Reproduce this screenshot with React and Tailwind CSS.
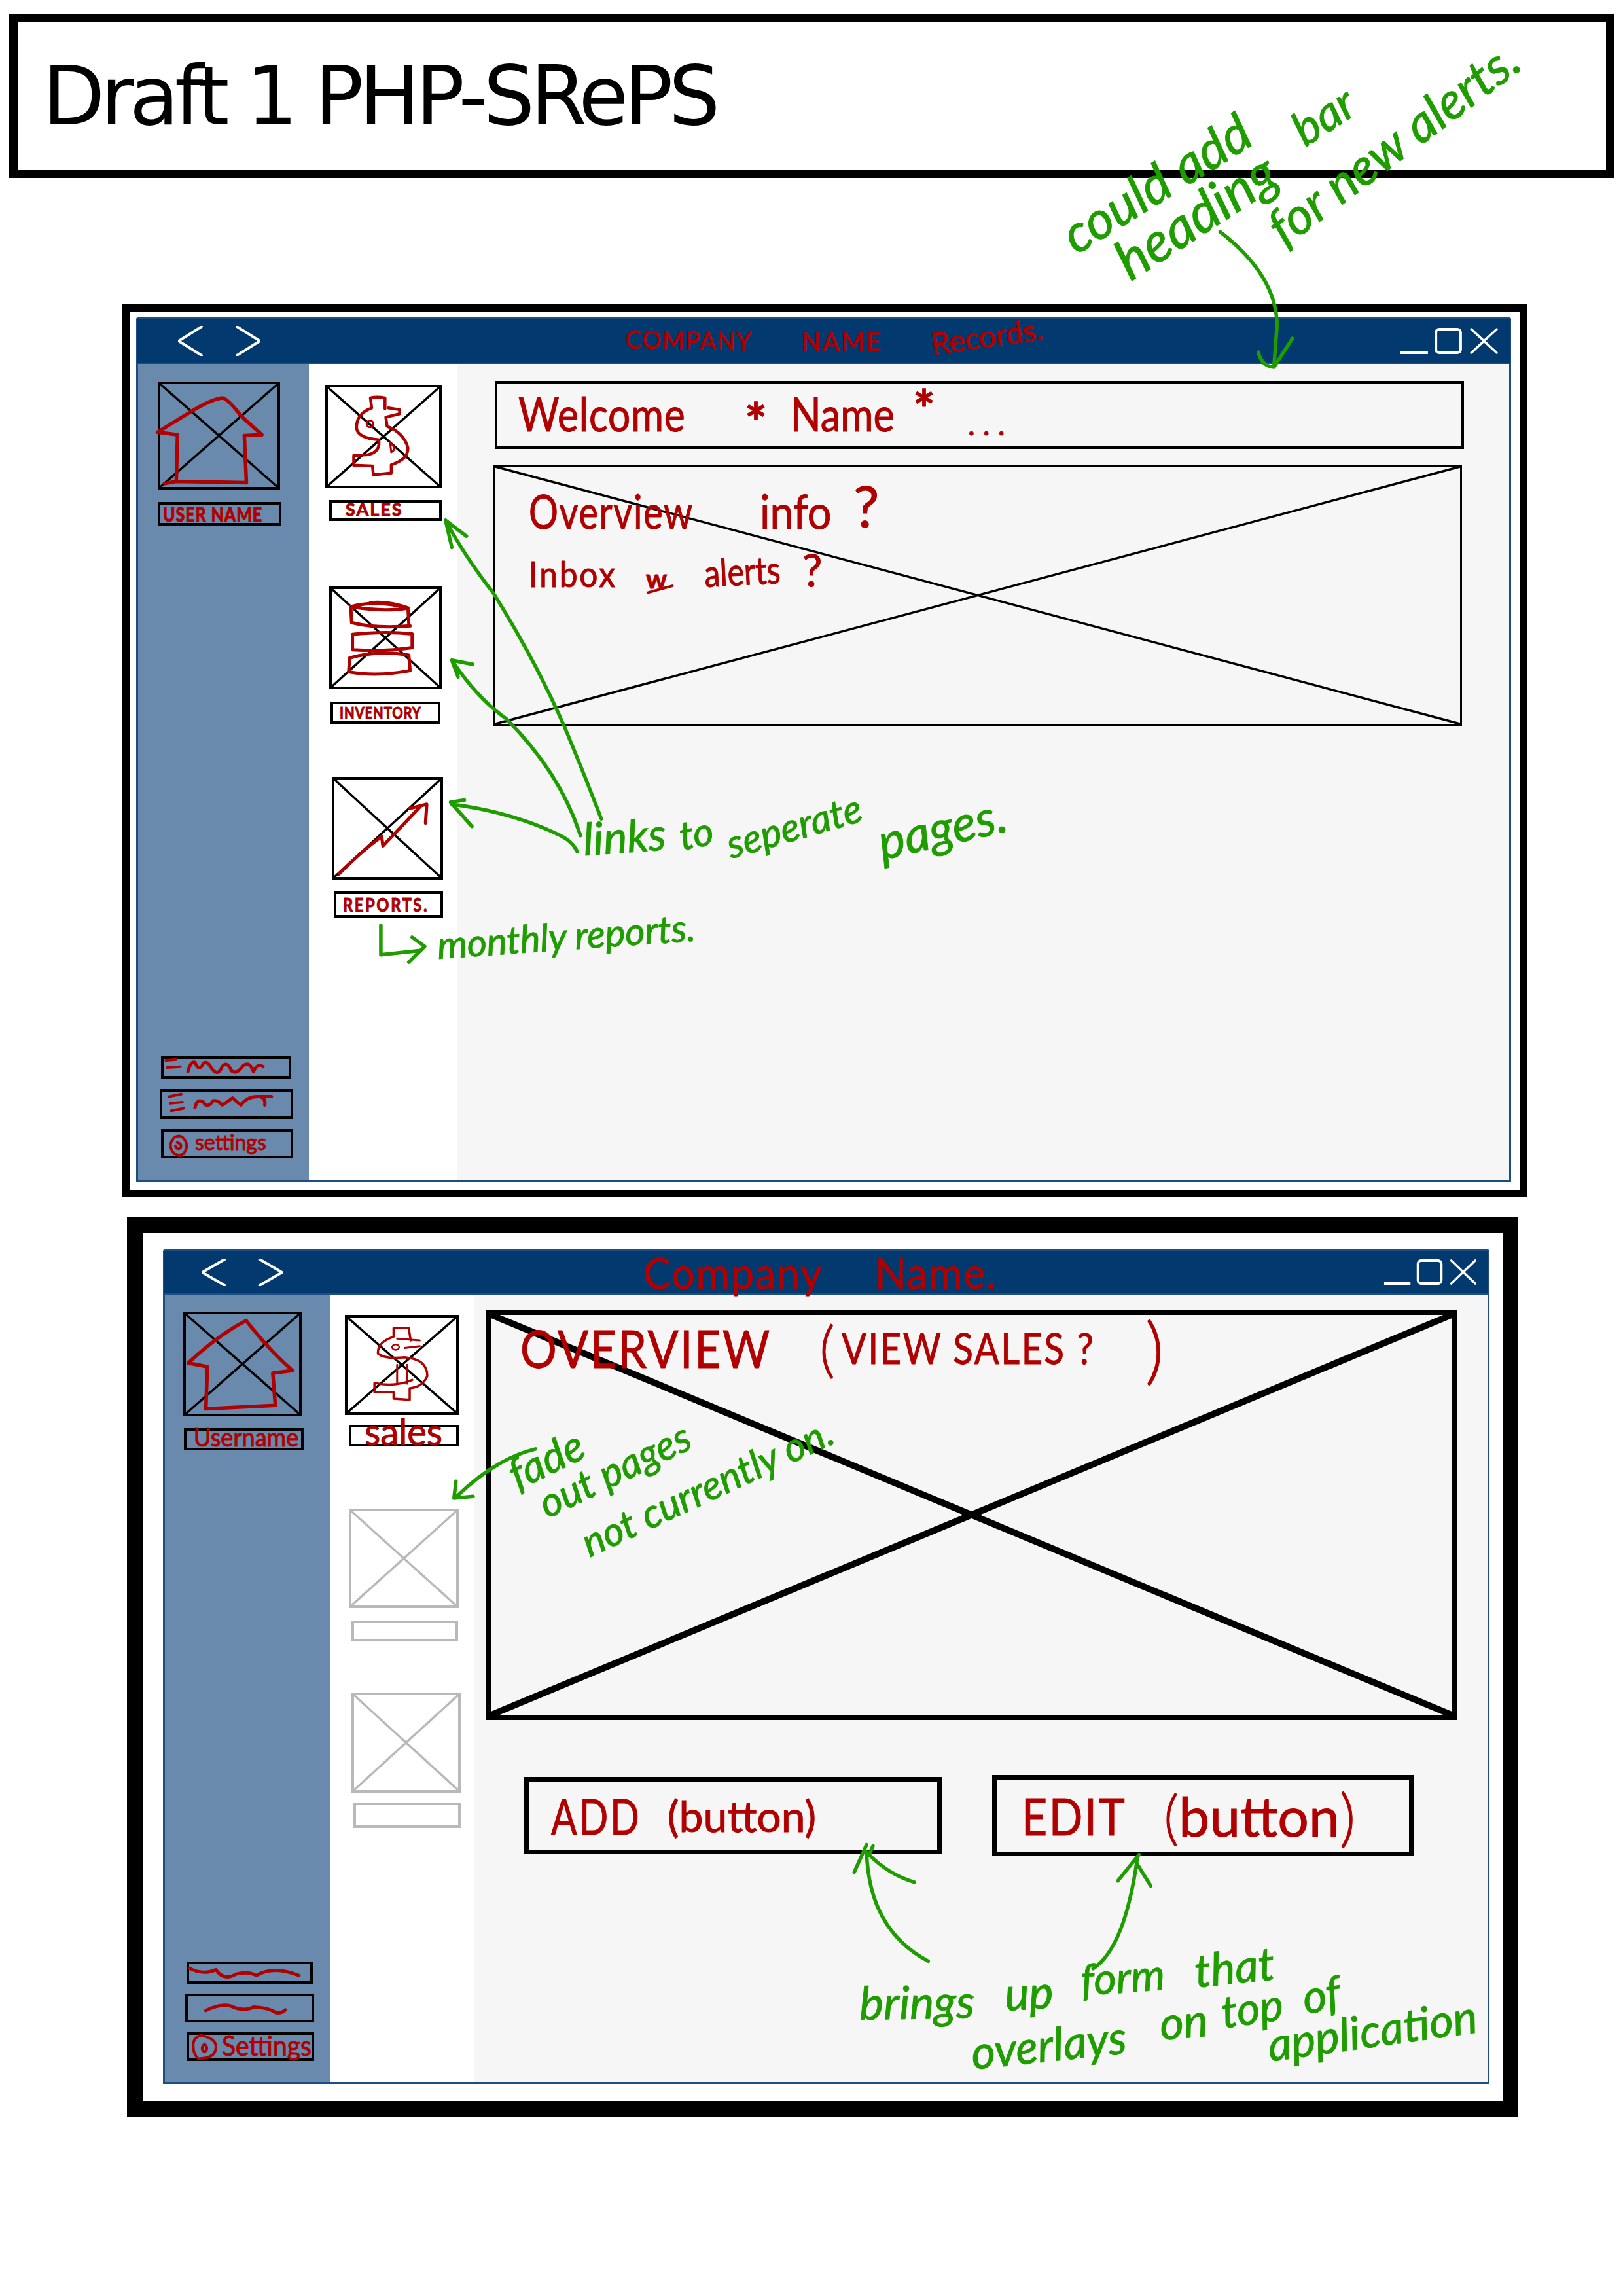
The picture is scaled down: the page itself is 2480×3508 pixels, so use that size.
import React from "react";

const RED = "#b00000";
const GREEN = "#1f9d00";

const P = ({ d, c = RED, w = 5 }) => (
  <path d={d} fill="none" stroke={c} strokeWidth={w} strokeLinecap="round" strokeLinejoin="round" vectorEffect="non-scaling-stroke" />
);
const G = ({ d, w = 5.5 }) => <P d={d} c={GREEN} w={w} />;

function XBox({ className = "", gray = false, w = 3.5, border = "border-[4px]" }) {
  const c = gray ? "#b9b9b9" : "#000000";
  return (
    <div className={`${border} ${gray ? "border-[#b9b9b9]" : "border-black"} ${className}`}>
      <svg className="block w-full h-full overflow-visible" viewBox="0 0 100 100" preserveAspectRatio="none">
        <path d="M0 0L100 100M100 0L0 100" fill="none" stroke={c} strokeWidth={w} vectorEffect="non-scaling-stroke" />
      </svg>
    </div>
  );
}

function Label({ className = "", gray = false, children, border = "border-[4px]" }) {
  return (
    <div className={`${border} ${gray ? "border-[#b9b9b9]" : "border-black"} flex items-center whitespace-nowrap leading-none text-[#b00000] ${className}`}>
      {children}
    </div>
  );
}

function Arrows({ className, w = 4 }) {
  return (
    <svg className={className} viewBox="0 0 126 46" preserveAspectRatio="none">
      <path d="M36 1L1 23L36 45M90 1L125 23L90 45" fill="none" stroke="#ffffff" strokeWidth={w} strokeLinecap="round" strokeLinejoin="round" vectorEffect="non-scaling-stroke" />
    </svg>
  );
}

function Controls({ className }) {
  return (
    <svg className={className} viewBox="0 0 148 40" preserveAspectRatio="none">
      <path d="M1 38H43" stroke="#ffffff" strokeWidth="5" fill="none" vectorEffect="non-scaling-stroke" />
      <rect x="55" y="2" width="37" height="36" rx="5" stroke="#ffffff" strokeWidth="4" fill="none" vectorEffect="non-scaling-stroke" />
      <path d="M108 2L146 38M146 2L108 38" stroke="#ffffff" strokeWidth="3.5" fill="none" strokeLinecap="round" vectorEffect="non-scaling-stroke" />
    </svg>
  );
}

function GreenNote({ className, children }) {
  return <span className={`absolute whitespace-nowrap leading-none origin-left italic text-[#1f9d00] ${className}`}>{children}</span>;
}

function Drawings() {
  return (
    <svg className="absolute left-0 top-0 w-[2480px] h-[3508px] pointer-events-none" viewBox="0 0 2480 3508">
      <g transform="translate(180 460) scale(.638)">
        <P d="M112 437L140 432L308 435L303 322L345 320L295 275Q262 232 250 232Q225 235 180 262L95 314L143 320L140 432" w={5.5} />
        <P d="M640 258L640 232Q620 228 605 232L608 256Q570 270 572 305Q575 328 625 332Q630 360 600 368L565 370L565 393L610 395L612 416L655 412L655 392Q695 380 695 352Q685 315 645 300L642 278L675 270L675 260L648 256" w={4.5} />
        <circle cx="604" cy="294" r="8" fill="none" stroke={RED} strokeWidth="3" vectorEffect="non-scaling-stroke" />
        <P d="M652 338L655 362Q670 355 652 338" w={3} />
        <P d="M558 732Q620 715 695 735L697 772M558 732L560 770Q620 785 700 778M605 722Q650 718 695 735Q640 745 558 732" w={5} />
        <P d="M562 798Q640 790 705 797L705 830Q640 840 562 835Z" w={5} />
        <P d="M555 855Q620 835 697 848L700 885Q620 900 553 888Z" w={5} />
        <P d="M530 1372Q580 1320 632 1282L635 1305L725 1210M700 1215L740 1205L737 1250" w={5} />
        <G d="M785 525Q830 610 900 700Q1000 860 1070 1020Q1120 1140 1158 1240M835 563L785 525L800 590" />
        <G d="M800 860Q860 950 930 1000Q1060 1130 1108 1280M850 870L800 860L815 900" />
        <G d="M848 1258L797 1200L830 1195M800 1205Q950 1225 1060 1280Q1090 1295 1100 1318" />
        <P d="M1270 698L1328 682" w={4} />
      </g>
      <g transform="translate(180 1400) scale(.638)">
        <G d="M630 22L630 92L725 82M705 50L735 72L697 110" />
        <P d="M115 345L140 343M118 362L150 360" w={4} />
        <P d="M168 372Q175 345 185 350Q195 375 205 352Q215 345 225 365Q240 385 250 360Q262 345 272 370Q285 380 300 358Q315 345 325 372Q335 350 348 360" w={5} />
        <P d="M122 432L152 426M125 448L155 445M128 466L158 460" w={4} />
        <P d="M185 458Q190 435 205 445Q215 462 228 442Q240 440 250 452Q262 445 275 435Q285 445 295 452Q310 430 340 432Q355 435 352 452M340 432L368 432" w={5} />
        <P d="M135 530Q150 520 160 535Q170 550 160 565Q150 578 135 568Q122 555 128 540ZM142 542Q155 545 150 555Q140 560 138 550" w={4} />
      </g>
      <g transform="scale(1.58 .383)">
        <G d="M1180 925Q1235 1100 1235 1300L1232 1465M1217 1405Q1220 1460 1232 1465L1250 1350" />
      </g>
      <g transform="translate(180 1850) scale(.769 .574)">
        <P d="M140 405Q200 330 255 292Q300 370 347 425L308 432L313 518L175 527L178 415Z" w={5.5} />
        <P d="M582 345L578 312L548 312L548 335Q515 350 517 380Q530 395 570 390Q615 395 615 440Q605 470 580 472L580 503L548 500L548 483L510 483L510 458Q550 470 585 450" w={3.5} />
        <P d="M600 345L555 340M600 360L570 365M555 410L555 460M575 410L575 460" w={3} />
        <circle cx="552" cy="363" r="7" fill="none" stroke={RED} strokeWidth="2.5" vectorEffect="non-scaling-stroke" />
        <G d="M830 634Q750 660 672 762M672 720L668 765L706 760" />
      </g>
      <g transform="translate(180 2550) scale(.769 .446)">
        <P d="M142 1025Q170 1050 195 1030Q210 1070 235 1045Q260 1035 275 1050Q310 1015 360 1050" w={5} />
        <P d="M175 1170Q205 1145 225 1155Q250 1175 270 1158Q300 1160 315 1178Q325 1180 333 1168" w={5} />
        <P d="M165 1255Q195 1265 195 1295Q195 1335 160 1335Q150 1320 150 1295Q148 1265 165 1255ZM172 1285Q182 1300 172 1312Q163 1300 172 1285" w={4} />
      </g>
      <g transform="translate(1200 2650) scale(.7526 .3827)">
        <G d="M290 905Q170 780 165 470M140 550L165 440M178 445L170 480Q210 560 262 590" />
        <G d="M625 935Q690 850 715 490M718 480L675 585M712 510L742 605" />
      </g>
    </svg>
  );
}

function Window1() {
  return (
    <div className="ml-[187px] mt-[193px] w-[2146px] h-[1364px] border-[11px] border-black pl-[10px] pt-[9px] bg-white">
      <div className="w-[2101px] h-[1321px] flex flex-col">
        <div className="h-[71px] bg-[#023a70] rounded-t-[3px] border-[2px] border-[#1c4d83] flex items-center pl-[62px] pr-[18px] text-[#b00000] whitespace-nowrap leading-none">
          <Arrows className="w-[126px] h-[46px] shrink-0" />
          <span className="ml-[558px] w-[189px] text-[38px] tracking-[2px] scale-x-[.95] origin-left rotate-[1deg] -translate-y-[4px]">COMPANY</span>
          <span className="ml-[80px] w-[126px] text-[38px] tracking-[3px]">NAME</span>
          <span className="ml-[71px] w-[182px] text-[46px] -rotate-[8deg] -translate-y-[8px]">Records.</span>
          <Controls className="ml-auto w-[151px] h-[40px] shrink-0" />
        </div>
        <div className="flex-1 flex border-x-[3px] border-b-[3px] border-[#1c4d83] min-h-0">
          <div className="w-[261px] bg-[#6a8aad] flex flex-col">
            <XBox className="ml-[30px] mt-[27px] w-[187px] h-[165px]" />
            <Label className="ml-[30px] mt-[19px] w-[189px] h-[36px] pl-[4px] text-[30px] font-bold">
              <span className="scale-x-[.84] origin-left tracking-[1px]">USER NAME</span>
            </Label>
            <Label className="ml-[35px] mt-auto w-[199px] h-[34px]" />
            <Label className="ml-[33px] mt-[16px] w-[204px] h-[45px]" />
            <Label className="ml-[35px] mt-[16px] mb-[33px] w-[202px] h-[45px] pl-[48px] pb-[6px] text-[32px]">settings</Label>
          </div>
          <div className="w-[226px] bg-white flex flex-col">
            <XBox className="ml-[25px] mt-[32px] w-[178px] h-[158px]" />
            <Label className="ml-[31px] mt-[18px] w-[172px] h-[32px] pl-[21px] pb-[5px] text-[27px] tracking-[2px] font-bold">SALES</Label>
            <XBox className="ml-[31px] mt-[100px] w-[172px] h-[157px]" />
            <Label className="ml-[33px] mt-[19px] w-[168px] h-[34px] pl-[10px] text-[24px] tracking-[1px] font-bold">
              <span className="scale-x-[.85] origin-left">INVENTORY</span>
            </Label>
            <XBox className="ml-[35px] mt-[81px] w-[170px] h-[157px]" />
            <Label className="ml-[38px] mt-[18px] w-[167px] h-[40px] pl-[10px] text-[28px] tracking-[3px] font-bold">
              <span className="scale-x-[.85] origin-left">REPORTS.</span>
            </Label>
          </div>
          <div className="flex-1 bg-[#f6f6f6] flex flex-col">
            <Label className="ml-[58px] mt-[26px] w-[1481px] h-[104px] pl-[32px] border-[3px]">
              <span className="w-[346px] text-[72px] tracking-[1px] scale-x-[.84] origin-left -translate-y-[3px]">Welcome</span>
              <span className="text-[80px] w-[70px] font-bold translate-y-[10px]">*</span>
              <span className="text-[72px] w-[187px] scale-x-[.85] origin-left -translate-y-[3px]">Name</span>
              <span className="text-[80px] -translate-y-[10px] w-[84px] font-bold">*</span>
              <span className="text-[46px] tracking-[12px] translate-y-[14px]">...</span>
            </Label>
            <div className="relative ml-[56px] mt-[24px] w-[1480px] h-[399px]">
              <XBox className="w-full h-full" border="border-[3.5px]" />
              <div className="absolute left-[54px] top-[18px] flex flex-col leading-none text-[#b00000] whitespace-nowrap">
                <div className="flex items-end">
                  <span className="w-[353px] text-[72px] tracking-[2px] scale-x-[.78] origin-left">Overview</span>
                  <span className="w-[143px] text-[72px] scale-x-[.9] origin-left">info</span>
                  <span className="text-[88px]">?</span>
                </div>
                <div className="flex items-end mt-[20px]">
                  <span className="w-[179px] text-[54px] tracking-[3px] scale-x-[.92] origin-left">Inbox</span>
                  <span className="w-[89px] text-[40px] font-bold">w</span>
                  <span className="w-[150px] text-[58px] -rotate-[3deg] scale-x-[.83] origin-left">alerts</span>
                  <span className="text-[68px]">?</span>
                </div>
              </div>
            </div>
          </div>
        </div>
      </div>
    </div>
  );
}

function Window2() {
  return (
    <div className="ml-[194px] mt-[31px] w-[2126px] h-[1374px] border-[24px] border-black pl-[31px] pt-[25px] bg-white">
      <div className="w-[2027px] h-[1275px] flex flex-col">
        <div className="h-[69px] bg-[#023a70] rounded-t-[3px] border-[2px] border-[#1c4d83] flex items-center pl-[57px] pr-[18px] text-[#b00000] whitespace-nowrap leading-none">
          <Arrows className="w-[124px] h-[42px] shrink-0" />
          <span className="ml-[551px] w-[354px] text-[66px] tracking-[2px] scale-x-[.95] origin-left">Company</span>
          <span className="w-[199px] text-[66px] tracking-[2px] scale-x-[.95] origin-left">Name.</span>
          <Controls className="ml-auto w-[142px] h-[39px] shrink-0" />
        </div>
        <div className="flex-1 flex border-x-[3px] border-b-[3px] border-[#1c4d83] min-h-0">
          <div className="w-[252px] bg-[#6a8aad] flex flex-col">
            <XBox className="ml-[28px] mt-[26px] w-[181px] h-[160px]" />
            <Label className="ml-[29px] mt-[18px] w-[183px] h-[34px] pl-[11px] pb-[8px] text-[38px]">
              <span className="scale-x-[.95] origin-left">Username</span>
            </Label>
            <Label className="ml-[33px] mt-auto w-[193px] h-[34px]" />
            <Label className="ml-[31px] mt-[15px] w-[197px] h-[44px]" />
            <Label className="ml-[33px] mt-[15px] mb-[32px] w-[195px] h-[44px] pl-[50px] pb-[4px] text-[42px]">
              <span className="scale-x-[.93] origin-left">Settings</span>
            </Label>
          </div>
          <div className="w-[220px] bg-white flex flex-col">
            <XBox className="ml-[23px] mt-[31px] w-[174px] h-[153px]" />
            <Label className="ml-[29px] mt-[15px] w-[168px] h-[33px] pl-[20px] pb-[14px] text-[56px]">sales</Label>
            <XBox gray className="ml-[29px] mt-[95px] w-[168px] h-[152px]" />
            <Label gray className="ml-[33px] mt-[19px] w-[163px] h-[32px]" />
            <XBox gray className="ml-[33px] mt-[78px] w-[167px] h-[153px]" />
            <Label gray className="ml-[36px] mt-[15px] w-[164px] h-[39px]" />
          </div>
          <div className="flex-1 bg-[#f6f6f6] flex flex-col">
            <div className="relative ml-[19px] mt-[23px] w-[1483px] h-[627px]">
              <XBox className="w-full h-full" border="border-[8px]" w={10} />
              <div className="absolute left-[52px] top-[2px] flex items-center leading-none text-[#b00000] whitespace-nowrap">
                <span className="w-[457px] text-[80px] tracking-[3px] scale-x-[.87] origin-left">OVERVIEW</span>
                <span className="text-[92px] font-light">(</span>
                <span className="w-[464px] text-[66px] ml-[10px] tracking-[3px] scale-x-[.85] origin-left">VIEW SALES ?</span>
                <span className="text-[112px] font-light">)</span>
              </div>
            </div>
            <div className="flex items-start ml-[77px] mt-[84px] leading-none text-[#b00000] whitespace-nowrap">
              <Label className="mt-[3px] w-[638px] h-[118px] pl-[34px] border-[7px]">
                <span className="w-[178px] text-[76px] tracking-[4px] scale-x-[.77] origin-left">ADD</span>
                <span className="text-[66px]">(button)</span>
              </Label>
              <Label className="ml-[77px] w-[644px] h-[124px] pl-[38px] border-[7px]">
                <span className="w-[217px] text-[78px] tracking-[3px] scale-x-[.87] origin-left">EDIT</span>
                <span className="text-[90px] font-light">(</span>
                <span className="text-[84px]">button</span>
                <span className="text-[96px] font-light">)</span>
              </Label>
            </div>
          </div>
        </div>
      </div>
    </div>
  );
}

export default function App() {
  return (
    <div className="relative w-[2480px] h-[3508px] bg-white overflow-hidden font-['Lato',sans-serif] [-webkit-text-stroke-width:1px]">
      <div className="ml-[14px] mt-[21px] w-[2453px] h-[251px] border-[13px] border-black flex items-center pl-[38px]">
        <h1 className="font-['DejaVu_Sans',sans-serif] font-normal text-[124px] leading-none tracking-[-6.8px] text-black whitespace-nowrap [-webkit-text-stroke-width:0]">Draft 1 PHP-SRePS</h1>
      </div>
      <Window1 />
      <Window2 />
      <Drawings />

      <GreenNote className="left-[1628px] top-[324px] text-[80px] -rotate-[32deg]">could add</GreenNote>
      <GreenNote className="left-[1979px] top-[166px] text-[72px] -rotate-[33deg]">bar</GreenNote>
      <GreenNote className="left-[1710px] top-[362px] text-[84px] -rotate-[33deg]">heading</GreenNote>
      <GreenNote className="left-[1945px] top-[316px] text-[78px] -rotate-[37deg]">for new alerts.</GreenNote>

      <GreenNote className="left-[891px] top-[1247px] text-[68px] -rotate-[4deg]">links</GreenNote>
      <GreenNote className="left-[1038px] top-[1246px] text-[60px] -rotate-[10deg]">to</GreenNote>
      <GreenNote className="left-[1111px] top-[1260px] text-[60px] -rotate-[16deg]">seperate</GreenNote>
      <GreenNote className="left-[1342px] top-[1248px] text-[76px] -rotate-[13deg]">pages.</GreenNote>
      <GreenNote className="left-[668px] top-[1414px] text-[58px] -rotate-[4deg]">monthly reports.</GreenNote>

      <GreenNote className="left-[780px] top-[2222px] text-[66px] -rotate-[26deg]">fade</GreenNote>
      <GreenNote className="left-[826px] top-[2268px] text-[62px] -rotate-[26deg]">out pages</GreenNote>
      <GreenNote className="left-[891px] top-[2328px] text-[61px] -rotate-[25deg]">not currently on.</GreenNote>

      <GreenNote className="left-[1313px] top-[3024px] text-[70px] -rotate-[1deg]">brings</GreenNote>
      <GreenNote className="left-[1535px] top-[3010px] text-[70px] -rotate-[3deg]">up</GreenNote>
      <GreenNote className="left-[1651px] top-[2991px] text-[66px] -rotate-[4deg]">form</GreenNote>
      <GreenNote className="left-[1825px] top-[2975px] text-[70px] -rotate-[6deg]">that</GreenNote>
      <GreenNote className="left-[1484px] top-[3100px] text-[70px] -rotate-[6deg]">overlays</GreenNote>
      <GreenNote className="left-[1772px] top-[3055px] text-[70px] -rotate-[5deg]">on</GreenNote>
      <GreenNote className="left-[1866px] top-[3039px] text-[68px] -rotate-[8deg]">top</GreenNote>
      <GreenNote className="left-[1990px] top-[3016px] text-[70px] -rotate-[10deg]">of</GreenNote>
      <GreenNote className="left-[1937px] top-[3088px] text-[70px] -rotate-[8deg]">application</GreenNote>
    </div>
  );
}
